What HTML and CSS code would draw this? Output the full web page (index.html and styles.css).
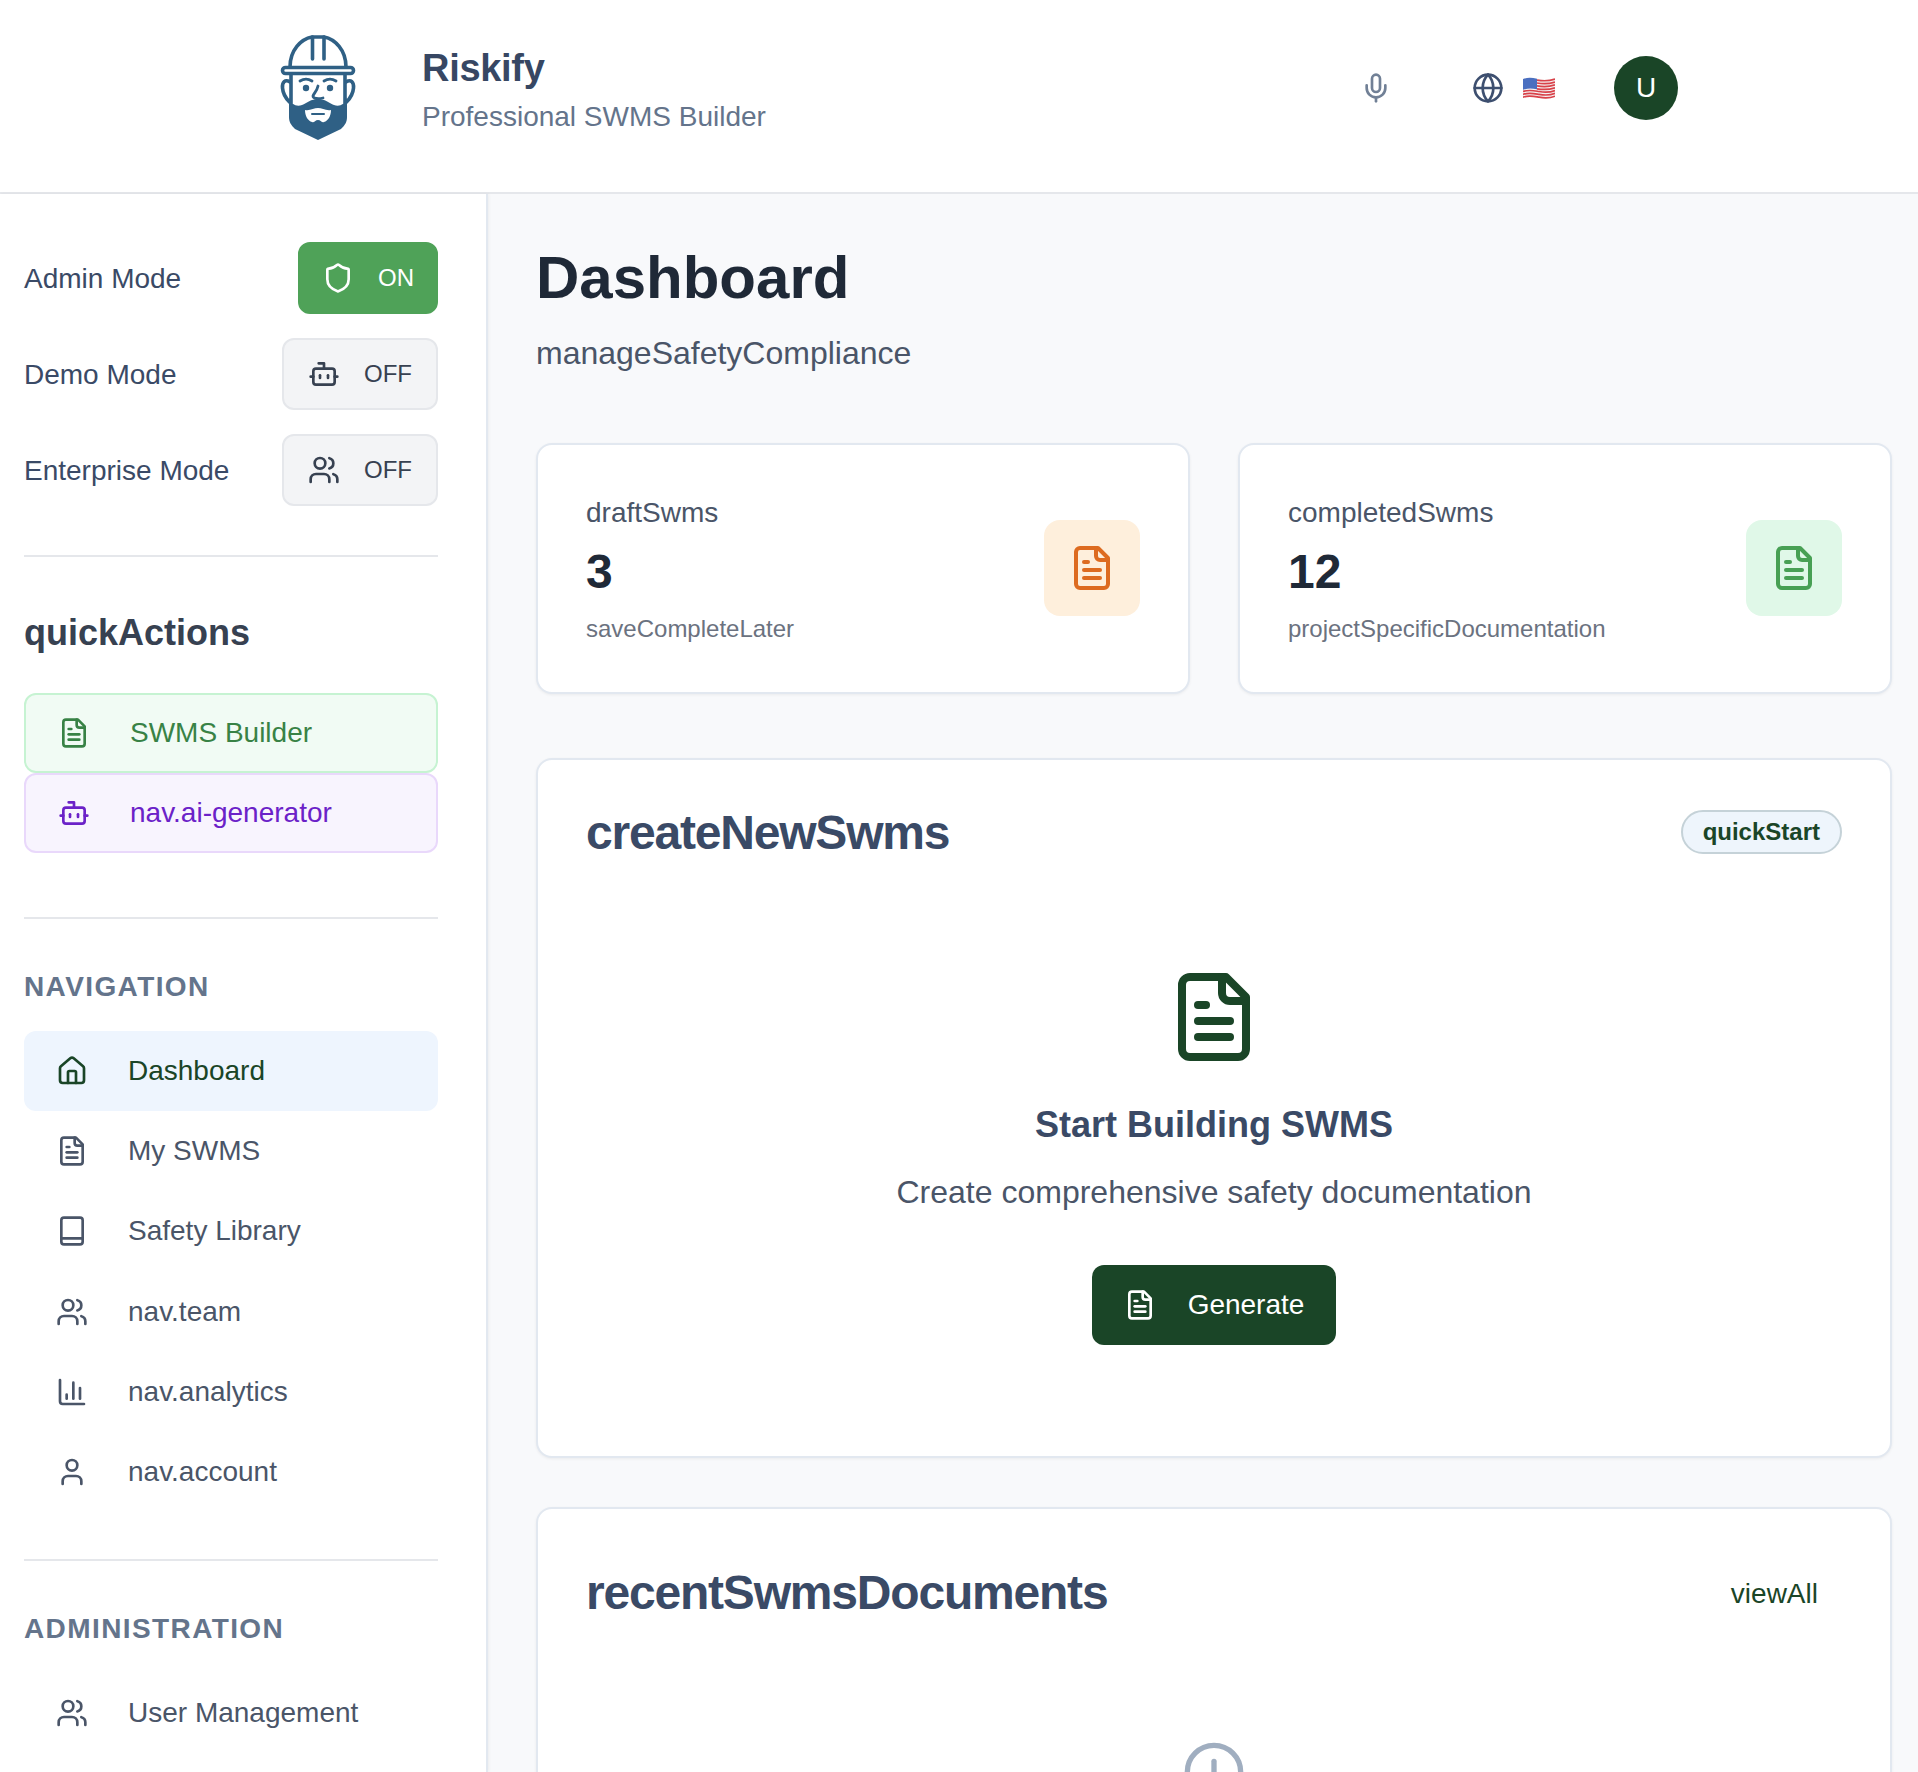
FILE: index.html
```html
<!DOCTYPE html>
<html lang="en">
<head>
  <meta charset="utf-8">
  <title>Riskify - Dashboard</title>
  <link rel="stylesheet" href="styles.css">
</head>
<body>

<svg class="sprite" xmlns="http://www.w3.org/2000/svg">
  <symbol id="i-file" viewBox="0 0 24 24"><path d="M15 2H6a2 2 0 0 0-2 2v16a2 2 0 0 0 2 2h12a2 2 0 0 0 2-2V7Z"/><path d="M14 2v4a2 2 0 0 0 2 2h4"/><path d="M10 9H8"/><path d="M16 13H8"/><path d="M16 17H8"/></symbol>
  <symbol id="i-bot" viewBox="0 0 24 24"><path d="M12 8V4H8"/><rect x="4" y="8" width="16" height="12" rx="2"/><path d="M2 14h2"/><path d="M20 14h2"/><path d="M15 13v2"/><path d="M9 13v2"/></symbol>
  <symbol id="i-shield" viewBox="0 0 24 24"><path d="M20 13c0 5-3.500 7.500-7.660 8.950a1 1 0 0 1-.67-.01C7.500 20.500 4 18 4 13V6a1 1 0 0 1 1-1c2 0 4.500-1.200 6.240-2.720a1.170 1.170 0 0 1 1.520 0C14.510 3.810 17 5 19 5a1 1 0 0 1 1 1z"/></symbol>
  <symbol id="i-users" viewBox="0 0 24 24"><path d="M16 21v-2a4 4 0 0 0-4-4H6a4 4 0 0 0-4 4v2"/><path d="M16 3.128a4 4 0 0 1 0 7.744"/><path d="M22 21v-2a4 4 0 0 0-3-3.870"/><circle cx="9" cy="7" r="4"/></symbol>
  <symbol id="i-home" viewBox="0 0 24 24"><path d="M15 21v-8a1 1 0 0 0-1-1h-4a1 1 0 0 0-1 1v8"/><path d="M3 10a2 2 0 0 1 .709-1.528l7-5.999a2 2 0 0 1 2.582 0l7 5.999A2 2 0 0 1 21 10v9a2 2 0 0 1-2 2H5a2 2 0 0 1-2-2z"/></symbol>
  <symbol id="i-book" viewBox="0 0 24 24"><rect x="4" y="2" width="16" height="20" rx="2"/><path d="M4 17.500h16"/></symbol>
  <symbol id="i-chart" viewBox="0 0 24 24"><path d="M3 3v16a2 2 0 0 0 2 2h16"/><path d="M18 17V9"/><path d="M13 17V5"/><path d="M8 17v-3"/></symbol>
  <symbol id="i-user" viewBox="0 0 24 24"><path d="M19 21v-2a4 4 0 0 0-4-4H9a4 4 0 0 0-4 4v2"/><circle cx="12" cy="7" r="4"/></symbol>
  <symbol id="i-mic" viewBox="0 0 24 24"><path d="M12 19v3"/><path d="M19 10v2a7 7 0 0 1-14 0v-2"/><rect x="9" y="2" width="6" height="13" rx="3"/></symbol>
  <symbol id="i-globe" viewBox="0 0 24 24"><circle cx="12" cy="12" r="10"/><path d="M12 2a14.500 14.500 0 0 0 0 20 14.500 14.500 0 0 0 0-20"/><path d="M2 12h20"/></symbol>
  <symbol id="i-alert" viewBox="0 0 24 24"><circle cx="12" cy="12" r="10"/><path d="M12 8v4"/><path d="M12 16h.01"/></symbol>
</svg>

<header class="topbar">
  <div class="brand">
    <svg class="logo" viewBox="0 0 76 105" xmlns="http://www.w3.org/2000/svg">
      <path class="logo-line" d="M10 32C10 15 21 4 32 2h12C55 4 66 15 66 32"/>
      <path class="logo-line" d="M32.500 2v22M44 2v22"/>
      <rect class="logo-line" x="2.500" y="32.500" width="71" height="6" rx="3"/>
      <path class="logo-line" d="M10 47C5 44 2 47 2.500 53c.5 6 3 10 7 14M66 47c5-3 8 0 7.500 6-.5 6-3 10-7 14"/>
      <path class="logo-line" d="M11 40v28M65 40v28"/>
      <path class="logo-fill" d="M9 62c2 8 8 10 13 8 5-2 9-6 16-6s11 4 16 6c5 2 11 0 13-8v20c0 5-2 8-6 12L38 105 15 94c-4-4-6-7-6-12z"/>
      <path class="logo-mouth" d="M25 75c5 1 9-2 13-2s8 3 13 2c0 6-3 11-7 12-3 1-3-2-6-2s-3 3-6 2c-4-1-7-6-7-12z"/>
      <path class="logo-smile" d="M32 79h12"/>
      <path class="logo-thin" d="M20 46c4-2.500 8-2.500 12 0M44 46c4-2.500 8-2.500 12 0"/>
      <circle class="logo-dot" cx="26" cy="53" r="3.200"/>
      <circle class="logo-dot" cx="50" cy="53" r="3.200"/>
      <path class="logo-thin" d="M38 51c-1 5-4 7-5 10 0 3 6 3 10 2"/>
    </svg>
    <div class="brand-text">
      <div class="brand-name">Riskify</div>
      <div class="brand-sub">Professional SWMS Builder</div>
    </div>
  </div>
  <div class="top-actions">
    <svg class="icon mic"><use href="#i-mic"/></svg>
    <svg class="icon globe"><use href="#i-globe"/></svg>
    <svg class="flag" viewBox="0 0 32 22" xmlns="http://www.w3.org/2000/svg">
      <path fill="#f4f1f1" d="M0 2c6-2 10-1 16 0s11 1 16-1v19c-5 2-10 2-16 1S6 19 0 21z"/>
      <path fill="none" stroke="#d9424a" stroke-width="1.700" d="M14 3.100c6 1 12 1 18-1M14 6c6 1 12 1 18-1M14 8.900c6 1 12 1 18-1M14 11.800c6 1 12 1 18-1M0 14.500c6-2 10-1 16 0s11 1 16-1M0 17.400c6-2 10-1 16 0s11 1 16-1M0 20.200c6-2 10-1 16 0s11 1 16-1"/>
      <path fill="#4a6fc0" d="M0 2c5-1.700 9-1.200 14-.3v10.500C9 11.300 5 11 0 12.800z"/>
    </svg>
    <div class="avatar">U</div>
  </div>
</header>

<div class="layout">
  <aside class="sidebar">
    <div class="mode-row">
      <span class="mode-label">Admin Mode</span>
      <div class="toggle toggle-on"><svg class="icon"><use href="#i-shield"/></svg>ON</div>
    </div>
    <div class="mode-row">
      <span class="mode-label">Demo Mode</span>
      <div class="toggle"><svg class="icon"><use href="#i-bot"/></svg>OFF</div>
    </div>
    <div class="mode-row">
      <span class="mode-label">Enterprise Mode</span>
      <div class="toggle"><svg class="icon"><use href="#i-users"/></svg>OFF</div>
    </div>

    <hr class="rule rule-modes">

    <h3 class="side-title">quickActions</h3>
    <a class="quick quick-green"><svg class="icon"><use href="#i-file"/></svg>SWMS Builder</a>
    <a class="quick quick-purple"><svg class="icon"><use href="#i-bot"/></svg>nav.ai-generator</a>

    <hr class="rule rule-quick">

    <div class="nav-head">Navigation</div>
    <a class="nav-item active"><svg class="icon"><use href="#i-home"/></svg>Dashboard</a>
    <a class="nav-item"><svg class="icon"><use href="#i-file"/></svg>My SWMS</a>
    <a class="nav-item"><svg class="icon"><use href="#i-book"/></svg>Safety Library</a>
    <a class="nav-item"><svg class="icon"><use href="#i-users"/></svg>nav.team</a>
    <a class="nav-item"><svg class="icon"><use href="#i-chart"/></svg>nav.analytics</a>
    <a class="nav-item"><svg class="icon"><use href="#i-user"/></svg>nav.account</a>

    <hr class="rule rule-nav">

    <div class="nav-head">Administration</div>
    <a class="nav-item"><svg class="icon"><use href="#i-users"/></svg>User Management</a>
  </aside>

  <main class="content">
    <h1 class="page-title">Dashboard</h1>
    <p class="page-sub">manageSafetyCompliance</p>

    <div class="stats">
      <div class="stat">
        <div>
          <div class="stat-label">draftSwms</div>
          <div class="stat-num">3</div>
          <div class="stat-note">saveCompleteLater</div>
        </div>
        <div class="stat-icon stat-orange"><svg class="icon"><use href="#i-file"/></svg></div>
      </div>
      <div class="stat">
        <div>
          <div class="stat-label">completedSwms</div>
          <div class="stat-num">12</div>
          <div class="stat-note">projectSpecificDocumentation</div>
        </div>
        <div class="stat-icon stat-green"><svg class="icon"><use href="#i-file"/></svg></div>
      </div>
    </div>

    <section class="panel panel-create">
      <div class="panel-head">
        <h2 class="panel-title">createNewSwms</h2>
        <span class="badge">quickStart</span>
      </div>
      <div class="empty">
        <svg class="icon empty-icon"><use href="#i-file"/></svg>
        <h3 class="empty-title">Start Building SWMS</h3>
        <p class="empty-text">Create comprehensive safety documentation</p>
        <a class="btn"><svg class="icon"><use href="#i-file"/></svg>Generate</a>
      </div>
    </section>

    <section class="panel panel-recent">
      <div class="panel-head">
        <h2 class="panel-title">recentSwmsDocuments</h2>
        <a class="view-all">viewAll</a>
      </div>
      <div class="empty">
        <svg class="icon recent-icon"><use href="#i-alert"/></svg>
      </div>
    </section>
  </main>
</div>

</body>
</html>
```

FILE: styles.css
```css
* { box-sizing: border-box; }
html, body { margin: 0; height: 1772px; overflow: hidden; }
body { font-family: "Liberation Sans", Arial, sans-serif; background: #f8f9fb; color: #1f2937; }
h1, h2, h3, p { margin: 0; }
.sprite { display: none; }

.icon { width: 32px; height: 32px; flex: none; fill: none; stroke: currentColor; stroke-width: 2; stroke-linecap: round; stroke-linejoin: round; }

/* header */
.topbar { height: 194px; display: flex; align-items: center; justify-content: space-between; padding: 0 240px 0 280px; background: #fff; border-bottom: 2px solid #e5e7eb; }
.brand { display: flex; align-items: center; gap: 66px; margin-top: -17px; }
.logo { width: 76px; height: 105px; flex: none; }
.logo-line { fill: none; stroke: #2f6085; stroke-width: 3.6; stroke-linecap: round; stroke-linejoin: round; }
.logo-fill, .logo-dot { fill: #2f6085; }
.logo-mouth { fill: #fff; }
.logo-smile { fill: none; stroke: #2f6085; stroke-width: 2; stroke-linecap: round; }
.logo-thin { fill: none; stroke: #2f6085; stroke-width: 2.8; stroke-linecap: round; }
.brand-text { margin-top: 6px; }
.brand-name { font-size: 38px; font-weight: 700; line-height: 48px; color: #374763; letter-spacing: -0.3px; }
.brand-sub { font-size: 28px; line-height: 40px; color: #64748b; margin-top: 5px; }
.top-actions { display: flex; align-items: center; margin-top: -17px; }
.mic { color: #718096; }
.globe { color: #3d4f6f; margin-left: 80px; }
.flag { width: 32px; height: 22px; margin-left: 19px; }
.avatar { width: 64px; height: 64px; margin-left: 59px; border-radius: 50%; background: #1a4527; color: #fff; font-size: 28px; display: flex; align-items: center; justify-content: center; }

.layout { display: flex; height: 1578px; }

/* sidebar */
.sidebar { width: 488px; flex: none; padding: 48px 48px 0 24px; background: #fff; border-right: 2px solid #e2e8f0; box-shadow: 1px 0 3px rgba(0,0,0,.05); overflow: hidden; }
.mode-row { display: flex; align-items: center; justify-content: space-between; height: 72px; margin-bottom: 24px; }
.mode-row:nth-child(3) { margin-bottom: 0; }
.mode-label { padding-top: 2px; font-size: 28px; color: #3a4a66; }
.toggle { height: 72px; display: flex; align-items: center; gap: 24px; padding: 0 24px; font-size: 24px; color: #374151; background: #f3f4f6; border: 2px solid #e5e7eb; border-radius: 12px; }
.toggle-on { padding: 0 22px; color: #fff; background: #4fa258; border-color: #4fa258; }

.rule { height: 2px; margin: 0; border: 0; background: #e5e7eb; }
.rule-modes { margin-top: 49px; }
.rule-quick { margin-top: 64px; }
.rule-nav { margin-top: 47px; }

.side-title { margin: 56px 0 40px; font-size: 36px; line-height: 40px; font-weight: 700; color: #374151; }
.quick { height: 80px; display: flex; align-items: center; gap: 40px; padding-left: 32px; font-size: 28px; border: 2px solid; border-radius: 12px; }
.quick-green { color: #388245; background: #f1fbf4; border-color: #c6f3d2; }
.quick-purple { color: #6b21c8; background: #f8f4fe; border-color: #e9d8fb; }

.nav-head { margin: 48px 0 24px; font-size: 28px; line-height: 40px; font-weight: 700; letter-spacing: 1.4px; text-transform: uppercase; color: #64748b; }
.nav-item { height: 80.2px; display: flex; align-items: center; gap: 40px; padding-left: 32px; font-size: 28px; color: #4a5568; border-radius: 12px; }
.nav-item.active { color: #1a4527; background: #eef5fe; }

/* main column */
.content { flex: 1; min-width: 0; padding: 48px 26px 0 48px; overflow: hidden; }
.page-title { font-size: 60px; line-height: 72px; font-weight: 700; color: #1f2937; }
.page-sub { margin-top: 17px; font-size: 32px; line-height: 44px; color: #4a5568; }

.stats { display: grid; grid-template-columns: 1fr 1fr; gap: 48px; margin-top: 68px; }
.stat { height: 251px; display: flex; align-items: center; justify-content: space-between; padding: 0 48px; background: #fff; border: 2px solid #e2e8f0; border-radius: 16px; box-shadow: 0 1px 3px rgba(0,0,0,.06); }
.stat-label { font-size: 28px; line-height: 40px; color: #4a5568; }
.stat-num { margin-top: 9px; font-size: 48px; line-height: 60px; font-weight: 700; color: #1f2937; }
.stat-note { margin-top: 11px; font-size: 24px; line-height: 32px; color: #6b7280; }
.stat-icon { width: 96px; height: 96px; margin-top: -2px; display: flex; align-items: center; justify-content: center; border-radius: 16px; }
.stat-icon .icon { width: 48px; height: 48px; }
.stat-orange { background: #feefdc; color: #dd6b20; }
.stat-green { background: #e0f8e8; color: #48a054; }

.panel { padding: 48px; background: #fff; border: 2px solid #e2e8f0; border-radius: 16px; box-shadow: 0 1px 3px rgba(0,0,0,.06); }
.panel-create { margin-top: 64px; padding-top: 49px; padding-bottom: 47px; }
.panel-recent { margin-top: 49px; }
.panel-head { display: flex; align-items: center; justify-content: space-between; margin-bottom: 48px; }
.panel-title { font-size: 48px; line-height: 48px; font-weight: 700; letter-spacing: -1.2px; color: #3a4a66; }
.badge { height: 44px; margin-top: -2px; display: flex; align-items: center; padding: 0 20px; font-size: 24px; font-weight: 700; color: #1a4527; background: #eef5fc; border: 2px solid #c5d2d8; border-radius: 22px; }
.view-all { height: 72px; display: flex; align-items: center; padding: 2px 24px 0; font-size: 28px; color: #1a4527; }

.empty { display: flex; flex-direction: column; align-items: center; padding: 64px 0; text-align: center; }
.empty-icon { width: 96px; height: 96px; color: #1a4527; }
.empty-title { margin-top: 36px; font-size: 36px; line-height: 48px; font-weight: 700; color: #3a4a66; }
.empty-text { margin-top: 21px; font-size: 32px; line-height: 44px; color: #4a5568; }
.btn { height: 80px; margin-top: 51px; display: flex; align-items: center; gap: 32px; padding: 0 32px; font-size: 28px; color: #fff; background: #1a4527; border-radius: 12px; }
.recent-icon { width: 64px; height: 64px; margin-top: -1px; color: #a0aec0; }
```
